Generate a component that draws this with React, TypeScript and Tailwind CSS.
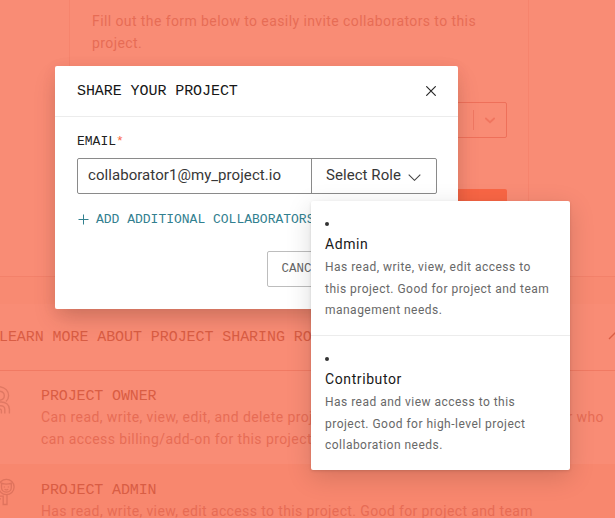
import React from 'react';

type Role = { name: string; lines: string[] };

const menuRoles: Role[] = [
  { name: 'Admin', lines: ['Has read, write, view, edit access to', 'this project. Good for project and team', 'management needs.'] },
  { name: 'Contributor', lines: ['Has read and view access to this', 'project. Good for high-level project', 'collaboration needs.'] },
];

function Page() {
  return (
    <main className="h-[518px] w-[760px] bg-[#f98c75] text-[14px] leading-[21.5px] tracking-[0.41px] text-[#e76c55]">
      <div className="h-[277px] border-b border-[#f3816a]">
        <section className="ml-[69px] flex h-[276px] w-[460px] flex-col border-x border-[#f6846d] pl-[22px] pr-[21px] pt-[11px]">
          <p className="whitespace-nowrap">Fill out the form below to easily invite collaborators to this<br />project.</p>
          <div className="mt-[48px] flex h-[36px] items-center justify-end rounded-[2px] border border-[#ee705a]">
            <span className="h-5 w-px bg-[#ef7762]" />
            <svg className="mx-[11px] h-[10px] w-[10px]" viewBox="0 0 10 10" fill="none" stroke="#f0755f" strokeWidth="1.8"><path d="m.3 3 4.7 4.2L9.7 3" /></svg>
          </div>
          <div className="mt-[51px] h-[36px] rounded-[2px] bg-[#f96645]" />
        </section>
      </div>
      <div className="h-[27px] bg-[#f88a72]" />
      <div className="flex h-[67px] items-center border-b border-[#f17a63]">
        <h2 className="-ml-px w-[609px] whitespace-nowrap pt-[2px] font-['Liberation_Mono',monospace] text-[15px] tracking-[-0.07px] text-[#d95d44]">LEARN MORE ABOUT PROJECT SHARING ROLES</h2>
        <svg className="mb-[3px] h-[8px] w-[14px]" viewBox="0 0 14 8" fill="none" stroke="#d95d44" strokeWidth="1.3"><path d="m1 7 6-6 6 6" /></svg>
      </div>
      <div className="flex h-[93px] pt-[15px]">
        <svg className="-mt-px h-[32px] w-[41px] shrink-0" viewBox="0 0 41 32" fill="none" stroke="#e07863" strokeWidth="1.4">
          <path d="M0 1.7c5.3.8 8.6 4.5 8.6 9.1 0 2.6-1 4.3-2.7 5.8M0 6.3c3 .5 4.3 2.1 4.3 4.4S3 14.7 0 15.2M0 17c5.8-.6 9.4 3.1 9.4 7.2v4.3M0 20.8c3.2-.3 4.8 1 4.8 3.9v3.8M0 24.2c1-.1 1.4.6 1.4 1.8v2.5" />
        </svg>
        <div>
          <h3 className="h-[21px] font-['Liberation_Mono',monospace] text-[15px] tracking-[-0.12px] text-[#d95d44]">PROJECT OWNER</h3>
          <p className="w-[563px] whitespace-nowrap"><span className="flex justify-between"><span>Can read, write, view, edit, and delete projects.</span><span>The only user who</span></span>can access billing/add-on for this project.</p>
        </div>
      </div>
      <div className="flex h-[54px] overflow-hidden bg-[#f8876e] pt-[16px]">
        <svg className="-mt-[2px] h-[32px] w-[41px] shrink-0" viewBox="0 0 41 32" fill="none" stroke="#df735d" strokeWidth="1.3">
          <circle cx="6.4" cy="9" r="7.7" /><path d="M1.5 5.2v4.2c0 2.8 2.1 4.7 4.9 4.7s4.9-1.9 4.9-4.7V5.2c-3 1.2-6.8 1.2-9.8 0ZM4.4 8.4v1M8.4 8.4v1M4.6 11.2c1.1.8 2.5.8 3.6 0M0 18.2h3.2v8.3H7V16.5M0 20.8h1" />
        </svg>
        <div>
          <h3 className="h-[21px] font-['Liberation_Mono',monospace] text-[15px] tracking-[-0.12px] text-[#d95d44]">PROJECT ADMIN</h3>
          <p className="whitespace-nowrap tracking-[0.38px]">Has read, write, view, edit access to this project. Good for project and team</p>
        </div>
      </div>
    </main>
  );
}

function ShareDialog() {
  return (
    <div role="dialog" className="absolute left-[55px] top-[66px] flex h-[243px] w-[403px] flex-col overflow-hidden rounded-[2px] bg-white">
      <header className="flex h-[51px] shrink-0 items-center justify-between border-b border-[#ececec] px-[22px]">
        <h1 className="pt-[2px] font-['Liberation_Mono',monospace] text-[15px] tracking-[-0.07px] text-[#171717]">SHARE YOUR PROJECT</h1>
        <svg className="h-[10px] w-[10px]" viewBox="0 0 10 10" fill="none" stroke="#262626" strokeWidth="1.15"><path d="m.3.3 9.4 9.4M9.7.3.3 9.7" /></svg>
      </header>
      <div className="px-[22px] pt-[15px]">
        <div className="h-[26px] font-['Liberation_Mono',monospace] text-[13px] leading-[20px] text-[#222]">EMAIL<span className="text-[#f96543]">*</span></div>
        <div className="flex h-[36px] w-[360px] rounded-[2px] border border-[#8a8a8a] text-[15px] tracking-[0.06px] text-[#373737]">
          <div className="flex w-[234px] shrink-0 items-center border-r border-[#8a8a8a] pb-px pl-[10px]">collaborator1@my_project.io</div>
          <div className="flex items-center whitespace-nowrap pb-px pl-[14px]">
            <span className="w-[82px]">Select Role</span>
            <svg className="mt-[3px] h-[7px] w-[13px]" viewBox="0 0 13 7" fill="none" stroke="#444" strokeWidth="1.1"><path d="m.7.7 5.8 5.6L12.3.7" /></svg>
          </div>
        </div>
        <div className="mt-[15px] flex h-[20px] items-center whitespace-nowrap font-['Liberation_Mono',monospace] text-[13px] text-[#32808f]">
          <svg className="ml-[1px] mr-[7px] h-[11px] w-[11px]" viewBox="0 0 11 11" fill="none" stroke="#32808f"><path d="M5.5.5v10M.5 5.5h10" /></svg>
          <span className="pt-[2px]">ADD ADDITIONAL COLLABORATORS</span>
        </div>
        <div className="mt-[22px] flex justify-end gap-[10px]">
          <button className="h-[36px] w-[74px] rounded-[2px] border border-[#bdbdbd] pt-px font-['Liberation_Mono',monospace] text-[12.5px] text-[#666]">CANCEL</button>
          <button aria-label="Invite" className="h-[36px] w-[85px] rounded-[2px] bg-[#f96543]" />
        </div>
      </div>
    </div>
  );
}

function RoleMenu() {
  return (
    <ul className="absolute left-[311px] top-[201px] h-[269px] w-[259px] rounded-[2px] bg-white shadow-[0_7px_26px_rgba(0,0,0,0.15),0_1px_3px_rgba(0,0,0,0.12)]">
      {menuRoles.map((role) => (
        <li key={role.name} className="h-[135px] border-b border-[#ececec] pl-[14px] pt-[21px] last:h-[134px] last:border-b-0">
          <span className="block h-[4px] w-[4px] rounded-full bg-[#333]" />
          <h2 className="mt-[7px] h-[22px] text-[14px] leading-[22px] tracking-[0.6px] text-[#181818]">{role.name}</h2>
          <p className="whitespace-nowrap pt-[2px] text-[12px] leading-[21.5px] tracking-[0.48px] text-[#686868]">
            {role.lines.map((line) => <span className="block" key={line}>{line}</span>)}
          </p>
        </li>
      ))}
    </ul>
  );
}

export default function App() {
  return (
    <div className="relative h-[518px] w-[615px] overflow-hidden font-['Roboto',sans-serif]">
      <Page />
      <div className="absolute left-[55px] top-[66px] h-[243px] w-[403px] shadow-[0_11px_22px_-4px_rgba(80,40,30,0.25),0_3px_14px_rgba(80,40,30,0.07)]" />
      <ShareDialog />
      <RoleMenu />
    </div>
  );
}
